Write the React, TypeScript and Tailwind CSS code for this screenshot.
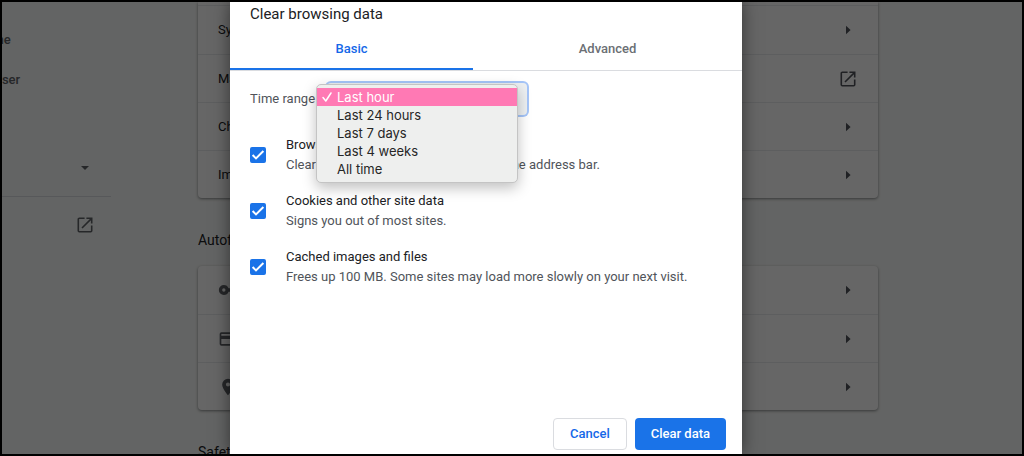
import { useState } from "react";

const timeRanges = ["Last hour", "Last 24 hours", "Last 7 days", "Last 4 weeks", "All time"];

const dataTypes = [
  {
    id: "history",
    title: "Browsing history",
    description: "Clears history and autocompletions in the address bar.",
  },
  {
    id: "cookies",
    title: "Cookies and other site data",
    description: "Signs you out of most sites.",
  },
  {
    id: "cache",
    title: "Cached images and files",
    description: "Frees up 100 MB. Some sites may load more slowly on your next visit.",
  },
];

function ArrowRight() {
  return (
    <svg viewBox="0 0 16 16" className="size-4" fill="currentColor">
      <path d="M6 3.8v8.4l4.6-4.2z" />
    </svg>
  );
}

function OpenInNew() {
  return (
    <svg viewBox="0 0 16 16" className="size-4" fill="none" stroke="currentColor" strokeWidth="1.6">
      <path d="M7.6 1.3H2.3a1 1 0 0 0-1 1v11.4a1 1 0 0 0 1 1h11.4a1 1 0 0 0 1-1V8.4" />
      <path d="M9.4 1.3h5.3v5.3M14.4 1.6 5 11" />
    </svg>
  );
}

function KeyIcon() {
  return (
    <svg viewBox="0 0 24 24" className="size-5" fill="currentColor">
      <path d="M12.65 10A6 6 0 0 0 7 6a6 6 0 0 0 0 12 6 6 0 0 0 5.65-4H17v4h4v-4h2v-4H12.65zM7 14a2 2 0 1 1 0-4 2 2 0 0 1 0 4z" />
    </svg>
  );
}

function CardIcon() {
  return (
    <svg viewBox="0 0 24 24" className="size-5" fill="currentColor">
      <path d="M20 4H4a2 2 0 0 0-2 2v12a2 2 0 0 0 2 2h16a2 2 0 0 0 2-2V6a2 2 0 0 0-2-2zm0 14H4v-6h16v6zm0-10H4V6h16v2z" />
    </svg>
  );
}

function PinIcon() {
  return (
    <svg viewBox="0 0 24 24" className="size-5" fill="currentColor">
      <path d="M12 2a7 7 0 0 0-7 7c0 5.25 7 13 7 13s7-7.75 7-13a7 7 0 0 0-7-7zm0 9.5a2.5 2.5 0 1 1 0-5 2.5 2.5 0 0 1 0 5z" />
    </svg>
  );
}

function Sidebar() {
  return (
    <nav className="w-[109px] shrink-0 pt-[18px] font-medium text-[#5f6368]">
      <a href="#search" className="-ml-[74px] flex h-10 items-center">Search engine</a>
      <a href="#browser" className="-ml-[74px] flex h-10 items-center">Default browser</a>
      <a href="#startup" className="-ml-[74px] flex h-10 items-center">On startup</a>
      <button className="-ml-[74px] flex h-14 w-[165px] items-center justify-between">
        Advanced
        <svg viewBox="0 0 16 16" className="size-4" fill="currentColor">
          <path d="M4 6h8l-4 4z" />
        </svg>
      </button>
      <div className="border-t border-[#dadce0]" />
      <a href="#extensions" className="-ml-[74px] flex h-14 w-[165px] items-center justify-between">
        Extensions
        <OpenInNew />
      </a>
    </nav>
  );
}

function SettingsRow({ label, icon, external }: { label: string; icon?: React.ReactNode; external?: boolean }) {
  return (
    <a href="#row" className="flex h-12 items-center border-t border-[#e8eaed] px-5 first:border-t-0">
      {icon && <span className="mr-5 text-[#5f6368]">{icon}</span>}
      <span className="flex-1">{label}</span>
      <span className="mr-[2px] text-[#50545a]">{external ? <OpenInNew /> : <ArrowRight />}</span>
    </a>
  );
}

function SettingsPage() {
  return (
    <div className="flex h-full bg-[#f8faf9] text-[13px] leading-5 text-[#202124]">
      <Sidebar />
      <main className="mr-36 ml-[87px] flex-1">
        <section className="rounded-b bg-white pt-[3px] shadow-[0_1px_3px_rgba(60,64,67,0.6)]">
          <div className="border-t border-[#e8eaed]">
            <SettingsRow label="Sync and Google services" />
            <SettingsRow label="Manage your Google Account" external />
            <SettingsRow label="Chrome name and picture" />
            <SettingsRow label="Import bookmarks and settings" />
          </div>
        </section>
        <h2 className="mt-8 mb-4 text-[14px] leading-5">Autofill</h2>
        <section className="rounded bg-white shadow-[0_1px_3px_rgba(60,64,67,0.6)]">
          <SettingsRow label="Passwords" icon={<KeyIcon />} />
          <SettingsRow label="Payment methods" icon={<CardIcon />} />
          <SettingsRow label="Addresses and more" icon={<PinIcon />} />
        </section>
        <h2 className="mt-8 text-[14px] leading-5">Safety check</h2>
      </main>
    </div>
  );
}

function TimeRange() {
  const [range, setRange] = useState(timeRanges[0]);

  return (
    <div className="relative flex h-8 items-center gap-3 px-5">
      <label htmlFor="range" className="text-[#50545a]">Time range</label>
      <select
        id="range"
        value={range}
        onChange={(e) => setRange(e.target.value)}
        className="h-8 w-[200px] appearance-none rounded bg-[#edf0f2] px-2 ring-2 ring-[#a5c5f8]"
      >
        {timeRanges.map((r) => (
          <option key={r}>{r}</option>
        ))}
      </select>
      <ul
        role="listbox"
        aria-label="Time range"
        className="absolute top-px left-[86px] w-[202px] rounded-[5px] border border-[#c4c4c4] bg-[#eeefee] pt-[3px] pb-1 font-['Inter',sans-serif] text-[13px] leading-[18px] text-[#262626] shadow-[0_5px_14px_rgba(0,0,0,0.25)]"
      >
        {timeRanges.map((r) => (
          <li
            key={r}
            role="option"
            aria-selected={r === range}
            onClick={() => setRange(r)}
            className="flex h-[18px] items-center pl-1 aria-selected:bg-[#ff79b4] aria-selected:text-white"
          >
            <span className="flex w-4 items-center">
              {r === range && (
                <svg viewBox="0 0 12 12" className="size-3" fill="none" stroke="currentColor" strokeWidth="1.5" strokeLinecap="round" strokeLinejoin="round">
                  <path d="M2 6.6 4.8 10 10 2" />
                </svg>
              )}
            </span>
            {r}
          </li>
        ))}
      </ul>
    </div>
  );
}

function DataTypeRow({ id, title, description }: { id: string; title: string; description: string }) {
  return (
    <div className="flex h-14 items-center gap-5 px-5">
      <span className="relative size-4">
        <input
          id={id}
          type="checkbox"
          defaultChecked
          className="peer block size-4 appearance-none rounded-[2px] border-2 border-[#5f6368] checked:border-[#1a73e8] checked:bg-[#1a73e8]"
        />
        <svg viewBox="0 0 16 16" className="pointer-events-none absolute inset-0 hidden size-4 peer-checked:block" fill="none" stroke="white" strokeWidth="2">
          <path d="M2.6 8 6 11.4 13.4 4" />
        </svg>
      </span>
      <label htmlFor={id} className="flex flex-col">
        <span className="text-[#202124]">{title}</span>
        <span className="text-[#50545a]">{description}</span>
      </label>
    </div>
  );
}

function ClearDataDialog() {
  return (
    <div
      role="dialog"
      aria-labelledby="dialog-title"
      className="flex h-full w-full max-w-[512px] flex-col bg-white text-[13px] leading-5 shadow-[0_0_16px_rgba(0,0,0,0.5)]"
    >
      <h1 id="dialog-title" className="px-5 text-[15px] leading-6 text-[#202124]">Clear browsing data</h1>
      <div role="tablist" className="mt-1 flex h-[41px] border-b border-[#dadce0] font-medium">
        <button role="tab" aria-selected="true" className="w-[243px] border-b-2 border-[#1a73e8] text-[#1568e8]">
          Basic
        </button>
        <button role="tab" aria-selected="false" className="flex-1 border-b-2 border-transparent text-[#6b6f74]">
          Advanced
        </button>
      </div>
      <div className="flex flex-col gap-3 pt-3">
        <TimeRange />
        <div>
          {dataTypes.map((d) => (
            <DataTypeRow key={d.id} {...d} />
          ))}
        </div>
      </div>
      <div className="mt-auto flex justify-end gap-2 px-4 pb-1 font-medium">
        <button className="h-8 rounded border border-[#dadce0] px-4 text-[#1568e8]">Cancel</button>
        <button className="h-8 rounded bg-[#1a73e8] px-4 text-white">Clear data</button>
      </div>
    </div>
  );
}

export default function App() {
  return (
    <div className="relative h-screen overflow-hidden border-2 border-black font-['Roboto',sans-serif]">
      <SettingsPage />
      <div className="absolute inset-0 flex justify-center bg-black/60 pr-[52px]">
        <ClearDataDialog />
      </div>
    </div>
  );
}
